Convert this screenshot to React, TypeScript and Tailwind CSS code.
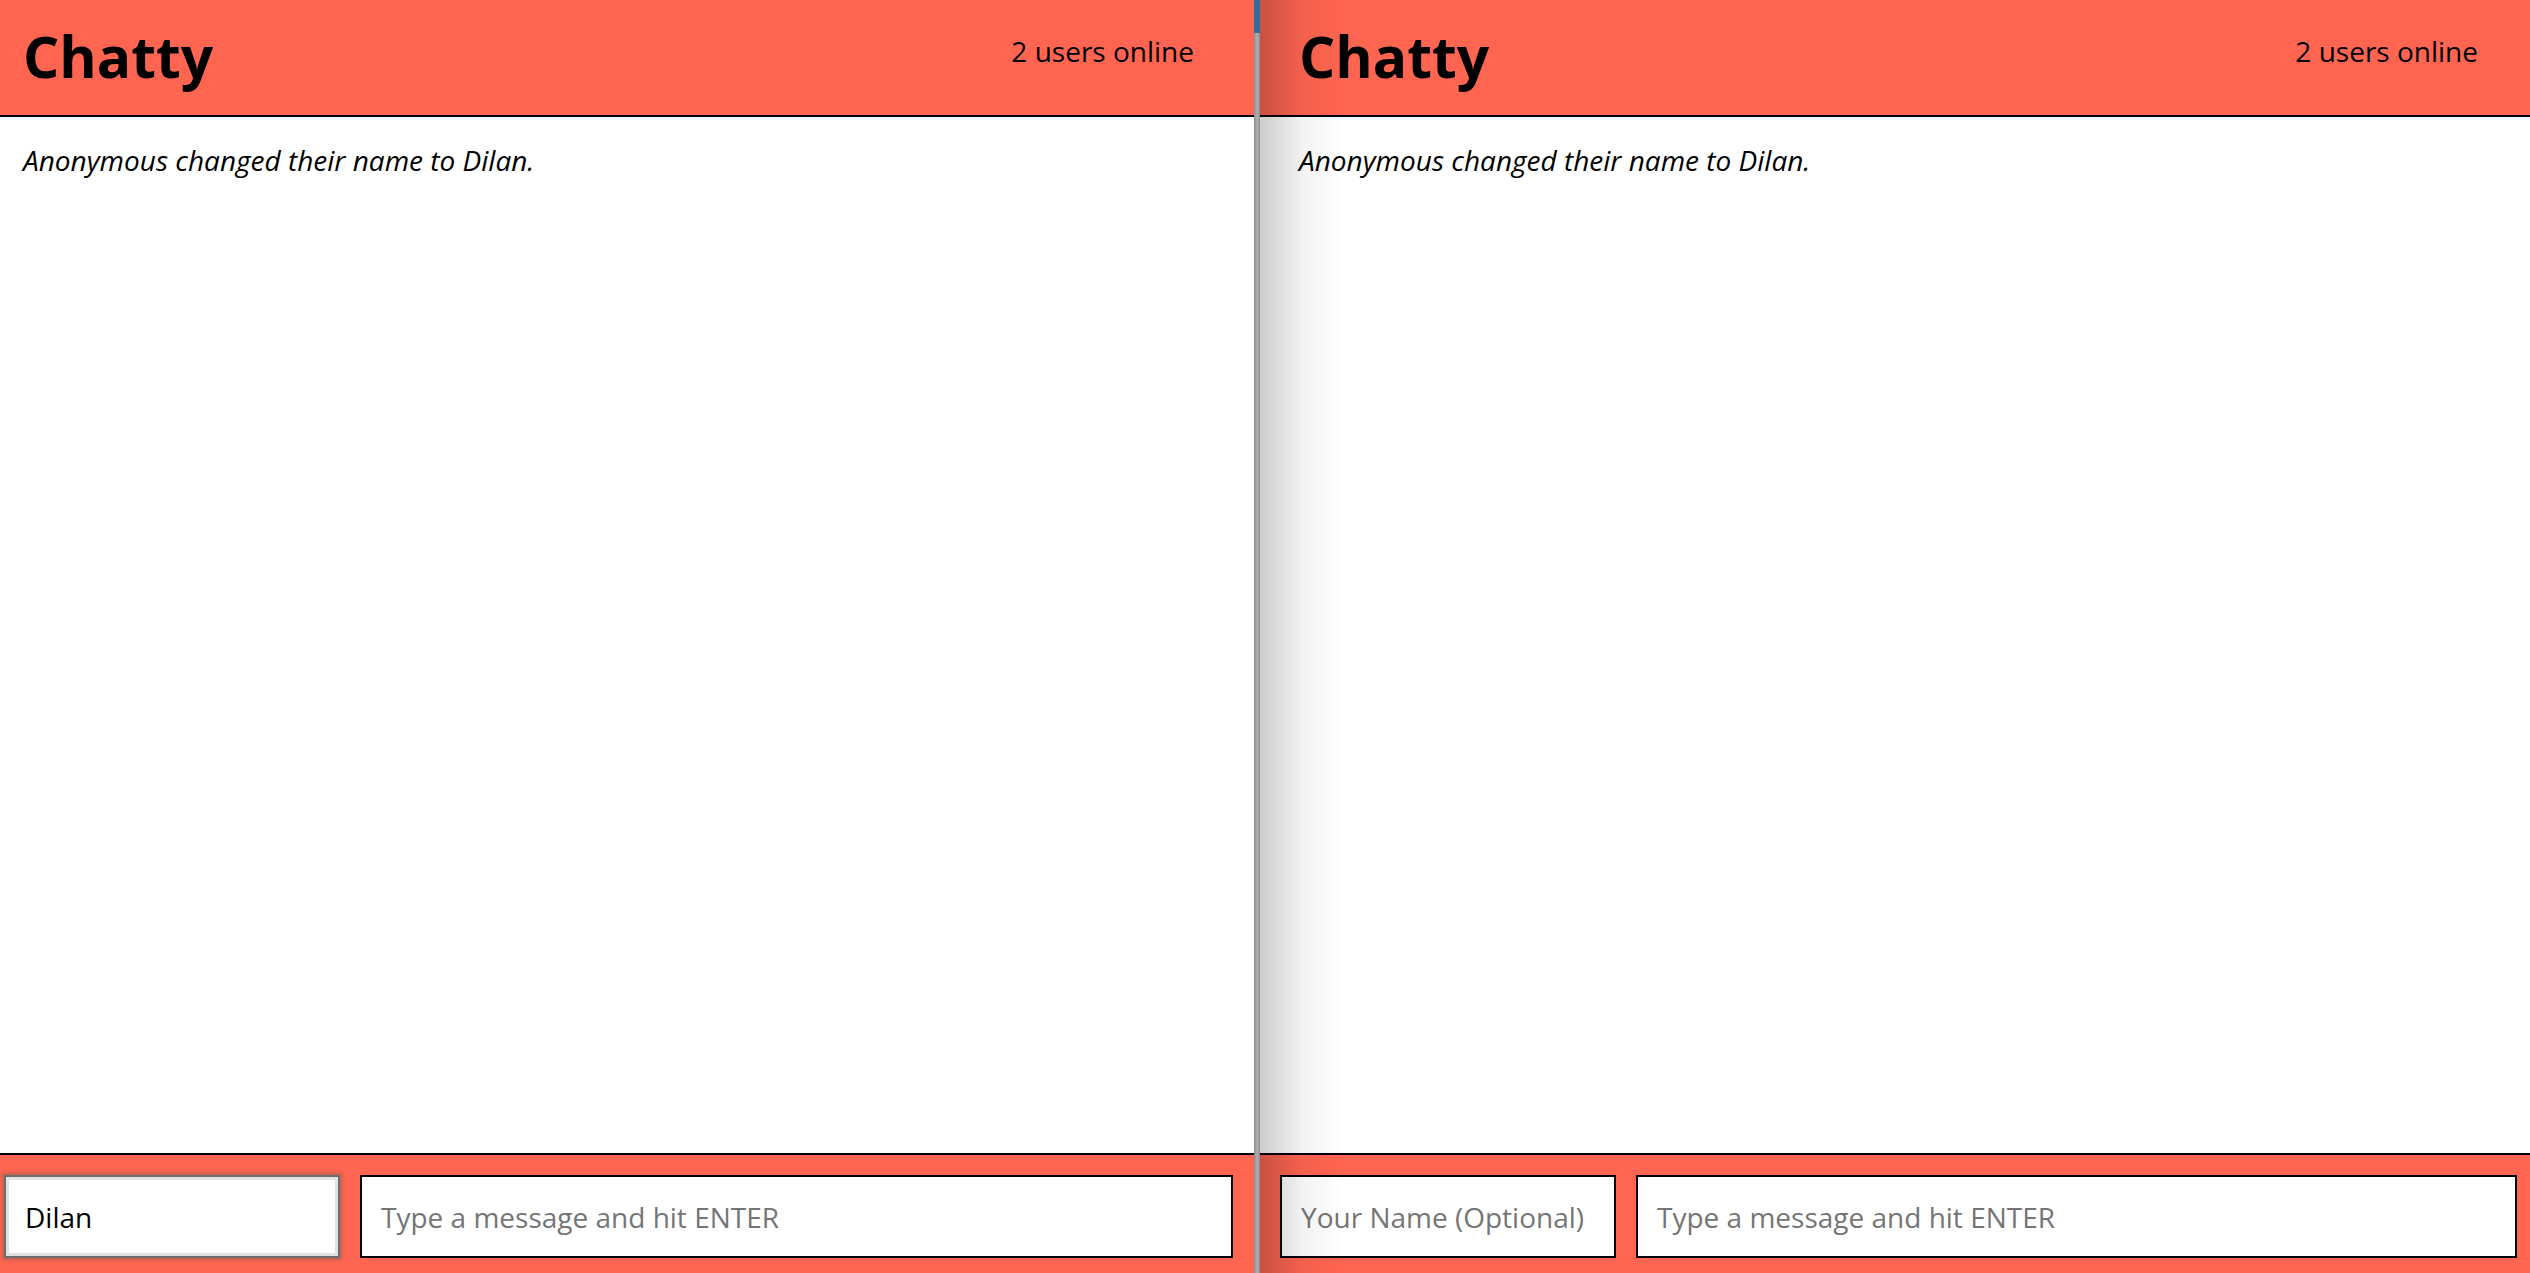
import { FC } from 'react';

type PaneProps = {
  side: 'left' | 'right';
  name?: string;
};

const Pane: FC<PaneProps> = ({ side, name }) => {
  const isLeft = side === 'left';

  return (
    <div
      className={
        isLeft
          ? 'flex h-full w-[1254px] shrink-0 flex-col'
          : 'relative flex h-full min-w-0 flex-1 flex-col'
      }
    >
      <header
        className={
          isLeft
            ? 'flex h-[117px] shrink-0 items-center justify-between border-b-2 border-black bg-[#ff6550] pl-[23px] pr-[60px]'
            : 'flex h-[117px] shrink-0 items-center justify-between border-b-2 border-black bg-[#ff6550] pl-[39px] pr-[52px]'
        }
      >
        <h1 className="mt-[-2px] text-[57px] font-bold leading-none text-black">Chatty</h1>
        <span className="mb-[14px] text-[28px] text-black">2 users online</span>
      </header>

      <main
        className={
          isLeft
            ? 'flex-1 bg-white pl-[23px] pt-[22px]'
            : 'flex-1 bg-white pl-[39px] pt-[22px]'
        }
      >
        <p className="text-[28px] italic text-black">
          Anonymous changed their name to Dilan.
        </p>
      </main>

      <footer
        className={
          isLeft
            ? 'flex h-[120px] shrink-0 gap-[20px] border-t-2 border-black bg-[#ff6550] pl-[4px] pr-[21px] pt-[20px]'
            : 'flex h-[120px] shrink-0 gap-[20px] border-t-2 border-black bg-[#ff6550] pl-[20px] pr-[13px] pt-[20px]'
        }
      >
        {isLeft ? (
          <input
            defaultValue={name}
            className="h-[83px] w-[336px] shrink-0 border-2 border-[#6e6e6e] bg-white px-[19px] text-[28px] text-black shadow-[inset_0_0_0_3px_#e1e1e3,0_0_4px_2px_rgba(90,90,90,0.4)] outline-none"
          />
        ) : (
          <input
            placeholder="Your Name (Optional)"
            className="h-[83px] w-[336px] shrink-0 border-2 border-black bg-white px-[19px] text-[28px] text-black outline-none placeholder:text-[#757575]"
          />
        )}
        <input
          placeholder="Type a message and hit ENTER"
          className="h-[83px] min-w-0 flex-1 border-2 border-black bg-white px-[19px] text-[28px] text-black outline-none placeholder:text-[#757575]"
        />
      </footer>

      {!isLeft && (
        <div className="pointer-events-none absolute inset-y-0 left-0 w-[85px] bg-gradient-to-r from-black/20 via-black/5 to-transparent" />
      )}
    </div>
  );
};

export default function App() {
  return (
    <div
      className="flex h-[1273px] w-[2530px] overflow-hidden bg-white"
      style={{ fontFamily: '"Open Sans", "Noto Sans", sans-serif' }}
    >
      <Pane side="left" name="Dilan" />
      <div className="flex w-[6px] shrink-0 flex-col">
        <div className="h-[33px] bg-[#2f6d9e]" />
        <div className="flex-1 bg-gradient-to-r from-[#8a8a8a] via-[#b0b0b0] to-[#8f8f8f]" />
      </div>
      <Pane side="right" />
    </div>
  );
}
